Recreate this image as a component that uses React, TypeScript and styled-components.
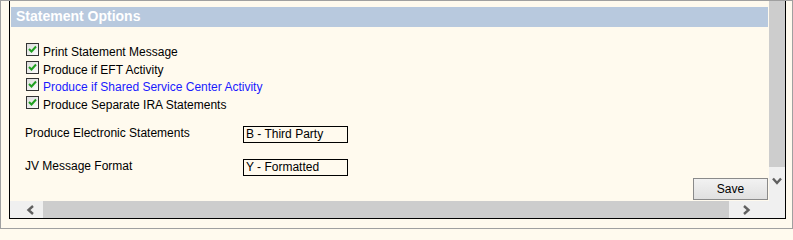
import * as React from 'react';
import styled, { createGlobalStyle } from 'styled-components';

const CREAM = '#fffaee';
const TRACK = '#f0f0f0';
const THUMB = '#cdcdcd';

const GlobalStyle = createGlobalStyle`
    html, body {
        margin: 0;
        padding: 0;
        background: ${CREAM};
    }
    body {
        font-family: 'Liberation Sans', Arial, sans-serif;
        font-size: 12px;
    }
`;

interface CheckOption {
    label: string;
    highlighted?: boolean;
}

const CHECK_OPTIONS: CheckOption[] = [
    { label: 'Print Statement Message' },
    { label: 'Produce if EFT Activity' },
    { label: 'Produce if Shared Service Center Activity', highlighted: true },
    { label: 'Produce Separate IRA Statements' },
];

const FIELDS = [
    { label: 'Produce Electronic Statements', value: 'B - Third Party' },
    { label: 'JV Message Format', value: 'Y - Formatted' },
];

const Chevron: React.FC<{ direction: 'left' | 'right' | 'down' }> = ({ direction }) => {
    const points = {
        left: '7,1 2.5,5 7,9',
        right: '3,1 7.5,5 3,9',
        down: '1,2.5 5,7 9,2.5',
    }[direction];
    return (
        <svg width={10} height={10} viewBox="0 0 10 10">
            <polyline points={points} fill="none" stroke="#606060" strokeWidth={2.4} />
        </svg>
    );
};

const CheckMark: React.FC = () => (
    <svg width={11} height={11} viewBox="0 0 11 11">
        <polyline points="2,5 4.5,7.5 9,2.5" fill="none" stroke="#1f9f1f" strokeWidth={2} />
    </svg>
);

const App: React.FC = () => (
    <>
        <GlobalStyle />
        <Frame>
            <Panel>
                <Viewport>
                    <SectionHeader>Statement Options</SectionHeader>
                    <CheckList>
                        {CHECK_OPTIONS.map((option) => (
                            <CheckRow key={option.label}>
                                <CheckBox>
                                    <CheckMark />
                                </CheckBox>
                                <CheckLabel $highlighted={option.highlighted}>{option.label}</CheckLabel>
                            </CheckRow>
                        ))}
                    </CheckList>
                    <FieldList>
                        {FIELDS.map((field) => (
                            <FieldRow key={field.label}>
                                <FieldLabel>{field.label}</FieldLabel>
                                <FieldValue>{field.value}</FieldValue>
                            </FieldRow>
                        ))}
                    </FieldList>
                    <Footer>
                        <SaveButton>Save</SaveButton>
                    </Footer>
                </Viewport>
                <VerticalScroll>
                    <VerticalThumb />
                    <ArrowDown>
                        <Chevron direction="down" />
                    </ArrowDown>
                </VerticalScroll>
                <HorizontalScroll>
                    <ArrowLeft>
                        <Chevron direction="left" />
                    </ArrowLeft>
                    <HorizontalThumb />
                    <ArrowRight>
                        <Chevron direction="right" />
                    </ArrowRight>
                </HorizontalScroll>
            </Panel>
        </Frame>
    </>
);

const Frame = styled.div`
    box-sizing: border-box;
    width: 793px;
    height: 229px;
    border: 1px solid #a0a0a0;
    padding: 0 6px 9px 8px;
    background: ${CREAM};
`;

const Panel = styled.div`
    box-sizing: border-box;
    height: 100%;
    border: 1px solid #000;
    border-top: none;
    background: ${TRACK};
    display: grid;
    grid-template-columns: 759px 16px;
    grid-template-rows: 200px 17px;
`;

const Viewport = styled.div`
    background: ${CREAM};
    overflow: hidden;
    padding-top: 6px;
    display: flex;
    flex-direction: column;
`;

const SectionHeader = styled.div`
    margin: 0 1px;
    height: 20px;
    background: #b8c9de;
    color: #fff;
    font-weight: bold;
    font-size: 14px;
    line-height: 19px;
    padding-left: 5px;
`;

const CheckList = styled.div`
    margin-top: 16px;
    padding-left: 16px;
    display: flex;
    flex-direction: column;
`;

const CheckRow = styled.div`
    height: 17.67px;
    display: flex;
    align-items: flex-start;
    gap: 4px;
`;

const CheckBox = styled.span`
    box-sizing: border-box;
    width: 13px;
    height: 13px;
    border: 1px solid #333;
    background: linear-gradient(135deg, #dcdcdc, #fbfbfb);
    display: flex;
    align-items: center;
    justify-content: center;
`;

const CheckLabel = styled.span<{ $highlighted?: boolean }>`
    line-height: 17px;
    margin-top: 1px;
    color: ${({ $highlighted }) => ($highlighted ? '#1a1aff' : '#000')};
`;

const FieldList = styled.div`
    margin-top: 12px;
    padding-left: 15px;
    display: flex;
    flex-direction: column;
    gap: 16px;
`;

const FieldRow = styled.div`
    display: flex;
    align-items: flex-start;
    height: 17px;
`;

const FieldLabel = styled.span`
    width: 218px;
    line-height: 14px;
    color: #000;
`;

const FieldValue = styled.span`
    box-sizing: border-box;
    width: 105px;
    height: 17px;
    border: 1px solid #000;
    padding-left: 2px;
    line-height: 15px;
    background: ${CREAM};
`;

const Footer = styled.div`
    margin-top: auto;
    display: flex;
    justify-content: flex-end;
    padding: 0 1px 1px 0;
`;

const SaveButton = styled.button`
    box-sizing: border-box;
    width: 75px;
    height: 22px;
    border: 1px solid #8a8a8a;
    background: linear-gradient(#f2f2f2, #e0e0e0);
    font-family: 'Liberation Sans', Arial, sans-serif;
    font-size: 12px;
    color: #000;
    padding: 0;
`;

const VerticalScroll = styled.div`
    display: flex;
    flex-direction: column;
    align-items: center;
`;

const VerticalThumb = styled.div`
    align-self: stretch;
    height: 166px;
    background: ${THUMB};
`;

const ArrowDown = styled.div`
    margin-top: 9px;
    display: flex;
`;

const HorizontalScroll = styled.div`
    grid-column: 1 / span 2;
    display: flex;
    align-items: stretch;
`;

const ArrowLeft = styled.div`
    width: 33px;
    display: flex;
    align-items: center;
    justify-content: flex-end;
    padding-right: 7px;
    box-sizing: border-box;
`;

const HorizontalThumb = styled.div`
    width: 686px;
    background: ${THUMB};
`;

const ArrowRight = styled.div`
    margin-left: 12px;
    display: flex;
    align-items: center;
`;

export default App;
